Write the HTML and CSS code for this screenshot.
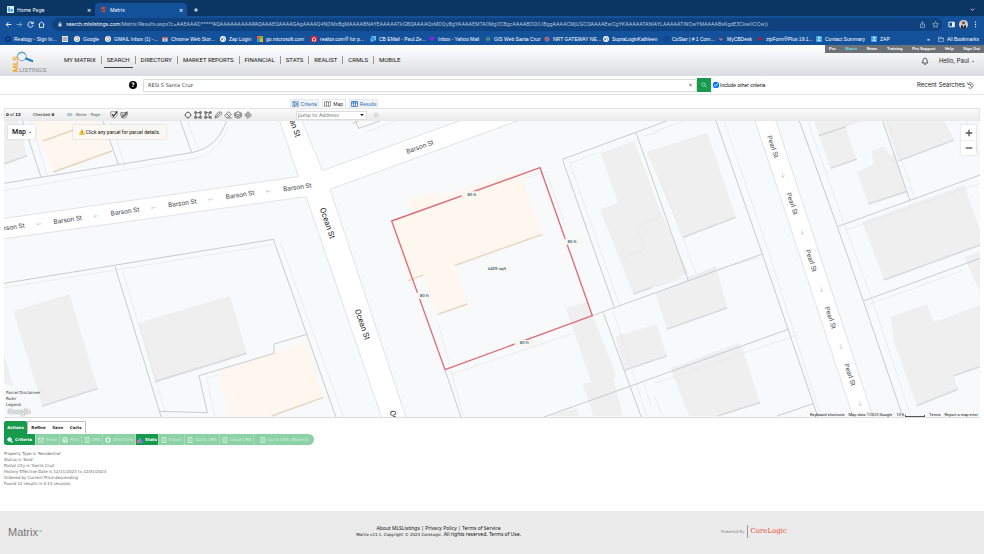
FILE: index.html
```html
<!DOCTYPE html>
<html lang="en">
<head>
<meta charset="utf-8">
<title>Matrix</title>
<link rel="stylesheet" href="styles.css">
</head>
<body>
<svg class="defs" aria-hidden="true">
  <symbol id="g" viewBox="0 0 12 12"><circle cx="6" cy="6" r="6" fill="#fff"/><path d="M9 4A3.600 3.600 0 0 0 3 4" fill="none" stroke="#e94435" stroke-width="1.600"/><path d="M3 4a4 4 0 0 0 0 4" fill="none" stroke="#f6b90a" stroke-width="1.600"/><path d="M3 8a3.600 3.600 0 0 0 5.500 .5" fill="none" stroke="#35a853" stroke-width="1.600"/><path d="M6 6h3.500q0 1.500-1 2.600" fill="none" stroke="#4285f4" stroke-width="1.600"/></symbol>
  <symbol id="globe" viewBox="0 0 12 12"><circle cx="6" cy="6" r="6" fill="#fff"/><path d="M2 4l3 1 1 2-2 3zM7 2l3 3-3 0zM8 7l2 0-2 3z" fill="#14519b"/></symbol>
  <symbol id="z" viewBox="0 0 12 12"><rect width="12" height="12" rx="1" fill="#42a5ec"/><path d="M3.500 3h5L4 9h5" fill="none" stroke="#fff" stroke-width="1.500"/></symbol>
  <symbol id="page" viewBox="0 0 12 12"><path d="M2 1h8v10H2z" fill="none" stroke="currentColor" stroke-width="1.500"/><path d="M4 4h4M4 6h4M4 8h4" stroke="currentColor"/></symbol>
</svg>

<div class="browser">
  <div class="tabstrip">
    <div class="tab"><svg viewBox="0 0 12 12"><rect width="12" height="12" fill="#d8eefa"/><path d="M2 2h3v8H2zM6 5h4v5H6z" fill="#3aa0dc"/></svg><span>Home Page</span><button aria-label="Close Home Page">×</button></div>
    <div class="tab current"><svg viewBox="0 0 12 12"><path d="M2 2l4-1 4 2-3 2 3 4-4 2-4-3z" fill="#c2503f"/><path d="M3 5l4 1-3 3z" fill="#64324c"/></svg><span>Matrix</span><button aria-label="Close Matrix">×</button></div>
    <button class="newtab" aria-label="New tab"><svg viewBox="0 0 12 12"><path d="M6 2v8M2 6h8" stroke="#fff" stroke-width="1.800"/></svg></button>
    <button class="more" aria-label="Search tabs"><svg viewBox="0 0 12 12"><path d="M2 4l4 4 4-4" fill="none" stroke="#fff" stroke-width="1.800"/></svg></button>
  </div>
  <div class="addressbar">
    <button aria-label="Back"><svg viewBox="0 0 12 12"><path d="M11 6H2M6 2L2 6l4 4" class="ln"/></svg></button>
    <button aria-label="Forward" class="dim"><svg viewBox="0 0 12 12"><path d="M1 6h9M6 2l4 4-4 4" class="ln"/></svg></button>
    <button aria-label="Reload"><svg viewBox="0 0 12 12"><path d="M10 4A4.500 4.500 0 1 0 10.500 7M10.500 1v3.500H7" class="ln"/></svg></button>
    <button aria-label="Home"><svg viewBox="0 0 12 12"><path d="M1 6l5-4.500L11 6M2.500 5v6h7V5" class="ln"/></svg></button>
    <div class="url">
      <svg viewBox="0 0 12 12"><rect x="3" y="5" width="6" height="6" fill="#c5d5e8"/><path d="M4 5V3q2-2 4 0v2" fill="none" stroke="#c5d5e8"/></svg>
      <label for="url">search.mlslistings.com</label><input id="url" value="/Matrix/Results.aspx?c=AAEAAAD*****AQAAAAAAAAARAQAAAEQAAAAGAgAAAAQ4NDMxBgMAAAABNAYEAAAAATkGBQAAAAQxMDQyBgYAAAAEMTA0Mg0CBgcAAAABOQ0JBggAAAACMjUGCQAAAAEwCgYKAAAAATANIAYLAAAAATINCwYMAAAABsKgdE3Ckw0CCw))">
      <button aria-label="Share"><svg viewBox="0 0 12 12"><path d="M4 5H2.500v6h7V5H8M6 8V1.500M4 3.500l2-2 2 2" class="ln thin"/></svg></button>
      <button aria-label="Bookmark"><svg viewBox="0 0 12 12"><path d="M6 1l1.500 3.400 3.500.4-2.700 2.400.8 3.800L6 9l-3.100 2 .8-3.800L1 4.800l3.500-.4z" class="ln thin"/></svg></button>
    </div>
    <button aria-label="Side panel"><svg viewBox="0 0 12 12"><path d="M1.500 2h9v8h-9z" class="ln"/><path d="M7 2h4v8H7z" fill="#fff"/></svg></button>
    <button aria-label="Profile" class="avatar"><svg viewBox="0 0 16 16"><circle cx="8" cy="8" r="8" fill="#d5d0d2"/><circle cx="8" cy="5" r="3" fill="#7d5145"/><path d="M3 15l1-6 4 1 4-1 1 6-5 1z" fill="#232433"/><path d="M7 9h2l-1 6z" fill="#fff"/></svg></button>
    <button aria-label="Menu"><svg viewBox="0 0 12 12"><g fill="#fff"><circle cx="6" cy="2" r="1.200"/><circle cx="6" cy="6" r="1.200"/><circle cx="6" cy="10" r="1.200"/></g></svg></button>
  </div>
  <nav class="bookmarks" aria-label="Bookmarks">
    <a href="#"><svg viewBox="0 0 12 12"><circle cx="6" cy="6" r="4.500" fill="none" stroke="#0a2a78" stroke-width="2.500"/></svg>Realogy - Sign In...</a>
    <a href="#" aria-label="Mail"><svg viewBox="0 0 12 12"><rect width="12" height="12" fill="#e9edf2"/><path d="M2 3h8v6H2zM2 6h8M6 3v6" fill="none" stroke="#746b76"/></svg></a>
    <a href="#"><svg><use href="#g"/></svg>Google</a>
    <a href="#"><svg><use href="#g"/></svg>GMAIL Inbox (1) -...</a>
    <a href="#"><svg viewBox="0 0 12 12"><path d="M1 3h10v8H1z" fill="#e8e8e8"/><path d="M1 2h10v3H1z" fill="#d95748"/><circle cx="6" cy="8" r="2" fill="#4b83d4"/></svg>Chrome Web Stor...</a>
    <a href="#"><svg><use href="#globe"/></svg>Zap Login</a>
    <a href="#"><svg viewBox="0 0 12 12"><path d="M0 0h6v6H0z" fill="#ef5b35"/><path d="M6 0h6v6H6z" fill="#83b42b"/><path d="M0 6h6v6H0z" fill="#1b9fdd"/><path d="M6 6h6v6H6z" fill="#f3b41b"/></svg>go.microsoft.com</a>
    <a href="#"><svg viewBox="0 0 12 12"><rect width="12" height="12" rx="2" fill="#d92236"/><path d="M3 10V5l3-2 3 2v5z" fill="none" stroke="#fff" stroke-width="1.500"/></svg>realtor.com® for p...</a>
    <a href="#"><svg viewBox="0 0 12 12"><rect x="3" width="9" height="9" fill="#63b9ec"/><rect y="3" width="8" height="9" fill="#1681d0"/><path d="M2 6h4M2 9h4" stroke="#fff"/></svg>CB EMail - Paul.Ze...</a>
    <a href="#"><svg viewBox="0 0 12 12"><path d="M0 3h12L6 9z" fill="#fff"/><path d="M0 2h12v4L6 9 0 6z" fill="#762bd8"/></svg>Inbox - Yahoo Mail</a>
    <a href="#"><svg viewBox="0 0 12 12"><circle cx="6" cy="6" r="5" fill="#357487"/><path d="M2 7q4-4 8 0" stroke="#94b7a0" fill="none"/></svg>GIS Web Santa Cruz</a>
    <a href="#"><svg viewBox="0 0 12 12"><circle cx="6" cy="6" r="5" fill="#8e7a96"/><path d="M3 4l5-1-2 7z" fill="#c74a4a"/></svg>NRT GATEWAY NE...</a>
    <a href="#"><svg><use href="#globe"/></svg>SupraLoginKathleen</a>
    <a href="#"><svg viewBox="0 0 12 12"><circle cx="6" cy="6" r="4.500" fill="none" stroke="#0d3d8a" stroke-width="2"/></svg>CoStar | # 1 Com...</a>
    <a href="#"><svg viewBox="0 0 12 12"><circle cx="6" cy="6" r="5.500" fill="#263d87"/><path d="M4 3v5h4V4" fill="none" stroke="#e0a3b0" stroke-width="1.500"/></svg>MyCBDesk</a>
    <a href="#"><svg viewBox="0 0 12 12"><path d="M1 9q0-7 5-7t5 7l-3-2-2 3-2-3z" fill="#962941"/></svg>zipForm®Plus 19.1...</a>
    <a href="#"><svg><use href="#z"/></svg>Contact Summary</a>
    <a href="#"><svg><use href="#z"/></svg>ZAP</a>
    <a href="#">»</a>
    <a href="#"><svg viewBox="0 0 12 12"><path d="M1 2h4l1 2h5v7H1zM1 5h10" fill="none" stroke="#d4e0f0"/></svg>All Bookmarks</a>
  </nav>
</div>

<header class="header">
  <a class="logo" href="#" aria-label="MLS Listings"><svg viewBox="0 0 108 66"><text transform="translate(20 64) rotate(-90)" class="mls">MLS</text><text x="23" y="64" class="listings">LISTINGS</text><circle cx="31" cy="16" r="13" fill="#eaf4fa" stroke="#6b7d89" stroke-width="2"/><path d="M19 10Q31-1 42 10" fill="none" stroke="#2797cf" stroke-width="3"/><path d="M44 23l18 7" stroke="#2485c8" stroke-width="7" stroke-linecap="round"/></svg></a>
  <nav class="mainnav" aria-label="Main">
    <a href="#">MY MATRIX</a><a href="#" class="on">SEARCH</a><a href="#">DIRECTORY</a><a href="#">MARKET REPORTS</a><a href="#">FINANCIAL</a><a href="#">STATS</a><a href="#">REALIST</a><a href="#">CRMLS</a><a href="#">MOBILE</a>
  </nav>
  <div class="account">
    <nav class="utility" aria-label="Utility"><a href="#">Pro</a><a href="#" class="on">Matrix</a><a href="#">News</a><a href="#">Training</a><a href="#">Pro Support</a><a href="#">Help</a><a href="#">Sign Out</a></nav>
    <div class="hello"><button aria-label="Notifications"><svg viewBox="0 0 16 16"><path d="M2 12q2-2 2-6 1-4 4-4t4 4q0 4 2 6zM6 14q2 2 4 0" fill="none" stroke="#333" stroke-width="1.500"/></svg></button><button>Hello, Paul <i class="caret"></i></button></div>
  </div>
</header>

<main>
  <form class="search">
    <button type="button" class="help" aria-label="Help">?</button>
    <div class="field"><input aria-label="Search" value="RESI S Santa Cruz"><button type="button" aria-label="Clear">×</button></div>
    <button type="button" class="go" aria-label="Run search"><svg viewBox="0 0 12 12"><circle cx="5" cy="5" r="3.500" fill="none" stroke="#fff"/><path d="M7.500 7.500L11 11" stroke="#fff"/></svg></button>
    <label class="include"><input type="checkbox" checked>Include other criteria</label>
    <button type="button" class="recent">Recent Searches <svg viewBox="0 0 14 14"><path d="M3 3a5.500 5.500 0 1 1 0 8M1 1l1 4h4M7 4v4l3 1" fill="none" stroke="#333" stroke-width="1.200"/></svg></button>
  </form>

  <div class="views">
    <a href="#"><svg viewBox="0 0 14 12"><path d="M0 2h14M0 6h14M0 10h14M4 0v4M10 4v4M5 8v4" stroke="#2a6fb8" stroke-width="1.500"/></svg>Criteria</a>
    <a href="#" class="on"><svg viewBox="0 0 14 12"><path d="M1 2l4-1 4 1 4-1v9l-4 1-4-1-4 1zM5 1v9M9 2v9" fill="none" stroke="#333"/></svg>Map</a>
    <a href="#"><svg viewBox="0 0 14 12"><path d="M1 1h12v10H1zM1 4h12M5 1v10M9 1v10" fill="none" stroke="#2a6fb8" stroke-width="1.500"/></svg>Results</a>
  </div>

  <div class="tools">
    <div class="count"><b>0</b> of <b>12</b></div>
    <div class="checked">Checked <b>0</b></div>
    <div class="select"><a href="#">All</a> - None - Page -</div>
    <div class="checks">
      <button aria-label="Keep checked"><svg viewBox="0 0 20 20"><path d="M2 2h16v9q-2 5-8 7-6-2-8-7z" fill="#fff" stroke="#555" stroke-width="1.500"/><path d="M5 8l4 5 9-12" fill="none" stroke="#333" stroke-width="3"/></svg></button>
      <button aria-label="Discard checked"><svg viewBox="0 0 20 20"><path d="M2 4h16v7q-2 5-8 7-6-2-8-7z" fill="#ddd" stroke="#555" stroke-width="1.500"/><path d="M5 8l4 5 9-12M3 17L19 5" fill="none" stroke="#333" stroke-width="2"/></svg></button>
    </div>
    <div class="shapes">
      <button aria-label="Circle"><svg viewBox="0 0 24 24"><circle cx="12" cy="12" r="8"/><path d="M12 1v5M12 18v5M1 12h5M18 12h5"/></svg></button>
      <button aria-label="Rectangle"><svg viewBox="0 0 24 24"><path d="M5 5h14v14H5z"/><path d="M2 2h5v5H2zM17 2h5v5h-5zM2 17h5v5H2zM17 17h5v5h-5z"/></svg></button>
      <button aria-label="Polygon"><svg viewBox="0 0 24 24"><path d="M5 5h14l-6 7 6 7H5z"/><path d="M2 2h5v5H2zM17 2h5v5h-5zM2 17h5v5H2zM17 17h5v5h-5z"/></svg></button>
      <button aria-label="Freehand"><svg viewBox="0 0 24 24"><path d="M3 21L6 11Q14 0 21 3T14 17zM7 17L18 6"/></svg></button>
      <button aria-label="Erase"><svg viewBox="0 0 24 24"><path d="M2 14L14 2l8 8-11 11H8zM8 8l8 8M11 21h12"/></svg></button>
      <button aria-label="Layers"><svg viewBox="0 0 24 24"><path d="M12 2l10 5-10 5L2 7zM2 12l10 5 10-5M2 17l10 5 10-5M2 7v10M22 7v10"/></svg></button>
      <button aria-label="Locate"><svg viewBox="0 0 24 24"><path d="M12 2l10 10-10 10L2 12z"/><circle cx="12" cy="12" r="4"/></svg></button>
    </div>
    <div class="jump"><select aria-label="Jump to Address"><option>Jump to Address</option></select></div>
    <button class="gear" aria-label="Map settings"><svg viewBox="0 0 16 16"><circle cx="8" cy="8" r="6" stroke-dasharray="3 1"/><circle cx="8" cy="8" r="3"/></svg></button>
  </div>

  <section class="map" aria-label="Map">
    <svg class="canvas" viewBox="12 3 2928 888">
      <rect x="12" y="3" width="2928" height="888" fill="#f8f9fb"/>
      <g class="bld">
        <path d="M12 0H55L82 107L12 132zM40 573L208 523L293 806L127 858zM12 700L40 800L12 790zM415 608L690 528L740 700L465 785z"/>
        <g transform="translate(990)"><path d="M812 100L912 62L990 270L1075 460L988 500L967 500L910 522L810 268L865 248zM708 565L772 545L858 765L850 775L878 888H790L758 793L783 785zM855 650L980 612L1010 708L885 750zM650 888L740 865L748 888z"/></g>
        <g transform="translate(1962)"><path d="M-22 95L160 38L245 292L88 352zM5 520L185 437L220 563L38 628zM50 745L255 668L265 685L318 848L190 888H105zM480 0H640L575 20L608 118L530 145L495 47zM608 155L660 133L652 93L690 80L712 110L722 98L757 215L643 252zM690 0H870L900 60L733 123zM625 305L930 195L978 330V375L690 480zM710 590L818 552L840 607L978 555V740L898 768L912 808L788 857L720 665zM930 410L978 395V515z"/></g>
      </g>
      <g fill="#fdf7f0">
        <path d="M92 0H298L336 93L160 156zM655 755L920 663L970 832L815 888H690z"/>
        <path transform="translate(990)" d="M238 240L318 215L330 232L570 148L637 343L375 436L413 552L323 583L280 465L235 482L183 303L248 280z"/>
      </g>
      <g class="shade">
        <path d="M12 132L82 107M127 858L293 806M465 785L740 700"/>
        <path transform="translate(990)" d="M910 522L967 502M885 750L1010 708" />
        <path transform="translate(1962)" d="M88 352L245 292M38 628L220 563M190 888L318 848M530 145L608 118M643 252L757 215M733 123L900 60M690 480L978 375M788 857L912 808M898 768L978 740"/>
      </g>
      <g class="tan"><path d="M160 156L336 93M128 63L255 18M815 888L970 832"/><path transform="translate(990)" d="M375 436L637 343M323 583L413 552M235 482L280 465M68 10L85 4"/></g>
      <g class="faint">
        <path d="M12 212L600 112Q665 85 685 15M92 0L142 170M330 0L375 140M560 0L597 90M12 503L820 374M366 450L500 888M840 365L1030 888M620 775L645 888M620 775L655 765"/>
        <path transform="translate(990)" d="M650 160L705 315M365 762L730 640M720 130L870 560M720 130L805 98M940 48L990 35M580 175L650 155M107 37L205 0M870 415L945 388L920 318L990 290M850 575L950 888M325 610L400 888M940 788L965 860"/>
        <path transform="translate(1962)" d="M0 35L95 0M210 0L345 400L500 888M460 0L570 310L660 555L770 888M575 330L978 190M640 555L930 450M0 500L325 410M0 790L430 645M20 178L130 470M700 0L785 240M0 825L25 888M935 0L978 110"/>
      </g>
      <path class="road" d="M0 297L895 170L838 0H905L967 152L1385 0H1560L990 208L1218 892H1145L990 440L918 230L0 358z"/>
      <path class="road" d="M2264 0H2327L2619 892H2560z"/>
      <g class="lot">
        <path d="M12 190L575 98Q655 82 680 0M67 0L123 172M308 0L355 133M540 0L575 98M12 490L820 358L1008 892M345 440L484 892M478 874L622 878L597 767L822 700V672L920 643"/>
        <path transform="translate(990)" d="M345 749L393 892M853 562L697 118L1010 3M918 38L1075 482M787 587L1297 402M820 578L934 892M640 892L1377 627M75 0L86 25L150 3"/>
        <path transform="translate(1962)" d="M185 0L325 402L492 892M435 0L550 320L628 543L747 892M550 320L978 165M628 543L978 415M685 0L767 240M370 888L480 850M495 47L575 20"/>
      </g>
      <path class="parcel" transform="translate(990)" d="M185 303L630 143L787 587L345 749z"/>
      <g class="street">
        <text transform="translate(32 329) rotate(-8)">Barson St</text><text transform="translate(204 306) rotate(-8)">Barson St</text><text transform="translate(376 281) rotate(-8)">Barson St</text><text transform="translate(548 256) rotate(-8)">Barson St</text><text transform="translate(721 231) rotate(-8)">Barson St</text><text transform="translate(893 208) rotate(-8)">Barson St</text><text transform="translate(1262 87) rotate(-20)">Barson St</text>
        <g class="big"><text transform="translate(871 8) rotate(71)">Ocean St</text><text transform="translate(975 312) rotate(71)">Ocean St</text><text transform="translate(1080 616) rotate(71)">Ocean St</text><text transform="translate(1184 920) rotate(71)">Ocean St</text></g>
        <text transform="translate(2312 82) rotate(71)">Pearl St</text><text transform="translate(2370 253) rotate(71)">Pearl St</text><text transform="translate(2427 424) rotate(71)">Pearl St</text><text transform="translate(2485 595) rotate(71)">Pearl St</text><text transform="translate(2543 766) rotate(71)">Pearl St</text>
      </g>
      <g class="arrow"><path d="M111 313l14-2M111 313l5-4M111 313l5 3M282 289l14-2M282 289l5-4M282 289l5 3M454 264l14-2M454 264l5-4M454 264l5 3M626 239l14-2M626 239l5-4M626 239l5 3M799 215l14-2M799 215l5-4M799 215l5 3"/><path d="M2346 158l4 14M2350 172l-6-3M2350 172l2-6M2404 329l4 14M2408 343l-6-3M2408 343l2-6M2462 501l4 14M2466 515l-6-3M2466 515l2-6M2520 672l4 14M2524 686l-6-3M2524 686l2-6M2578 843l4 14M2582 857l-6-3M2582 857l2-6"/></g>
      <g class="dim-bg"><path d="M1385 214h60v18h-60zM1694 356h52v18h-52zM1249 518h46v18h-46zM1544 660h60v18h-60zM1461 439h70v16h-70z"/></g>
      <g class="dims"><text x="1415" y="227">80 ft</text><text x="1716" y="369">80 ft</text><text x="1273" y="531">80 ft</text><text x="1573" y="673">80 ft</text><text x="1491" y="451">6409 sqft</text></g>
    </svg>
    <button class="maptype">Map <i class="caret"></i></button>
    <p class="notice"><svg viewBox="0 0 12 12"><path d="M6 1l5.500 10H.5z" fill="#f6cf45" stroke="#d8ab27"/><path d="M6 4v4M6 9v1" stroke="#5e4a12"/></svg>Click any parcel for parcel details.</p>
    <div class="zoom"><button aria-label="Zoom in"><svg viewBox="0 0 12 12"><path d="M6 1v10M1 6h10" stroke="#555" stroke-width="2"/></svg></button><button aria-label="Zoom out"><svg viewBox="0 0 12 12"><path d="M1 6h10" stroke="#555" stroke-width="2"/></svg></button></div>
    <div class="maplinks"><a href="#">Parcel Disclaimer</a><a href="#">Ruler</a><a href="#">Legend</a><span class="google">Google</span></div>
    <div class="credits"><a href="#">Keyboard shortcuts</a><span>Map data ©2023 Google</span><span class="scale">10 ft <i></i></span><a href="#">Terms</a><a href="#">Report a map error</a></div>
  </section>

  <section class="actions">
    <div class="actiontabs"><button class="on">Actions</button><div><button>Refine</button><button>Save</button><button>Carts</button></div></div>
    <div class="actionbar">
      <button class="on"><svg viewBox="0 0 12 12"><circle cx="5" cy="5" r="3.500" fill="#dff" stroke="#fff" stroke-width="2"/><path d="M8 8l3 3" stroke="#fff" stroke-width="2.500"/></svg>Criteria</button>
      <button disabled><svg viewBox="0 0 12 12"><path d="M0 2h12v8H0zM0 2l6 5 6-5" fill="none" stroke="currentColor" stroke-width="1.500"/></svg>Email</button>
      <button disabled><svg viewBox="0 0 12 12"><path d="M3 4V1h6v3M1 4h10v5H1zM3 7h6v4H3z" fill="none" stroke="currentColor" stroke-width="1.500"/></svg>Print</button>
      <button disabled><svg><use href="#page"/></svg>CMA</button>
      <button disabled><svg viewBox="0 0 12 12"><circle cx="6" cy="6" r="4" fill="none" stroke="currentColor" stroke-width="3"/></svg>Directions</button>
      <button class="on"><svg viewBox="0 0 12 12"><path d="M0 6h4v6H0z" fill="#ef6382"/><path d="M4 2h4v10H4z" fill="#6495ed"/><path d="M8 7h4v5H8z" fill="#8a68d0"/></svg>Stats</button>
      <button disabled><svg><use href="#page"/></svg>Export</button>
      <button disabled><svg><use href="#page"/></svg>Quick CMA</button>
      <button disabled><svg><use href="#page"/></svg>Cloud CMA</button>
      <button disabled><svg><use href="#page"/></svg>Quick CMA (Modern)</button>
    </div>
  </section>

  <section class="summary">
    <p>Property Type is 'Residential'</p><p>Status is 'Sold'</p><p>Postal City is 'Santa Cruz'</p><p>History Effective Date is 12/11/2023 to 12/01/2023</p><p>Ordered by Current Price descending</p><p>Found 12 results in 0.13 seconds.</p>
  </section>
</main>

<footer class="footer">
  <div class="brand">Matrix<sup>™</sup></div>
  <div class="legal"><p class="links"><a href="#">About MLSListings</a> | <a href="#">Privacy Policy</a> | <a href="#">Terms of Service</a></p><p>Matrix v11.1. Copyright © 2023 CoreLogic. <span class="links">All rights reserved. <a href="#">Terms of Use.</a></span></p></div>
  <div class="powered"><span>Powered By</span><strong>CoreLogic</strong></div>
</footer>
</body>
</html>
```

FILE: styles.css
```css
* { box-sizing: border-box; }
body { margin: 0; min-height: 100vh; display: flex; flex-direction: column; background: #fff; color: #222; font: 4px/6px "DejaVu Sans", sans-serif; overflow-x: hidden; }
main { flex: 1; display: flex; flex-direction: column; }
button, input, select { font: inherit; color: inherit; margin: 0; padding: 0; border: 0; background: none; }
button { display: flex; align-items: center; justify-content: center; white-space: nowrap; }
a { color: inherit; text-decoration: none; }
p { margin: 0; }
svg { display: block; flex: none; }
.defs { position: absolute; width: 0; height: 0; }
.ln { fill: none; stroke: #fff; stroke-width: 1.500; }
.thin { stroke: #c5d5e8; stroke-width: 1; }
.caret { display: inline-block; margin-left: 3px; border: 1px solid transparent; border-top-color: currentColor; border-bottom: 0; }

/* Browser chrome */
.browser { background: #14519b; color: #fff; font: 5px/6px Inter, sans-serif; }
.tabstrip { display: flex; align-items: flex-end; height: 16px; background: #0b3563; padding-right: 8px; }
.tab { display: flex; align-items: center; gap: 3px; width: 95px; height: 13px; padding: 0 3px 0 7px; }
.tab.current { width: 92px; padding: 0 3px 0 5px; background: #14519b; border-radius: 4px 4px 0 0; }
.tab svg { width: 7px; height: 7px; }
.tab span { flex: 1; }
.tab button { width: 6px; height: 6px; font-size: 7px; }
.newtab, .more { width: 8px; height: 13px; }
.newtab { margin-left: 5px; }
.more { margin-left: auto; }
.newtab svg { width: 6px; height: 6px; }
.more svg { width: 5px; height: 5px; }
.addressbar { display: flex; align-items: center; gap: 4px; height: 16px; padding: 0 5px; }
.addressbar svg { width: 7px; height: 7px; }
.addressbar .dim { opacity: .5; }
.addressbar .avatar svg { width: 9px; height: 9px; }
.url { flex: 1; display: flex; align-items: center; height: 13px; margin: 0 2px 0 3px; padding: 0 3px 0 5px; border-radius: 7px; background: #10427f; }
.url > svg { margin-right: 3px; width: 6px; height: 6px; }
.url input { flex: 1; min-width: 0; color: #b4c7de; }
.url button { margin-left: 6px; }
.bookmarks { display: grid; grid-template-columns: 57fr 12fr 31fr 57fr 58fr 37fr 54fr 59fr 59fr 56fr 59fr 59fr 60fr 55fr 39fr 59fr 55fr 56fr 11fr 46fr; align-items: center; height: 13px; padding-left: 5px; font-family: "Liberation Sans", sans-serif; }
.bookmarks a { display: flex; align-items: center; gap: 3px; width: 0; white-space: nowrap; }
.bookmarks svg { width: 6px; height: 6px; }

/* Site header */
.header { display: flex; align-items: flex-start; height: 31px; padding-left: 11px; background: linear-gradient(#fff, #dadde0); font: 6px/8px Roboto, sans-serif; }
.logo svg { width: 37px; height: 22px; margin-top: 6px; }
.mls { font: 700 24px Roboto, sans-serif; fill: #f0a82c; }
.listings { font: 18px "Liberation Sans", sans-serif; fill: #7d8388; }
.logo { width: 48px; }
.mainnav { display: flex; margin-top: 11px; color: #111; }
.mainnav a { position: relative; padding: 0 5px; }
.mainnav a + a { border-left: 1px solid #999; }
.mainnav .on::after { content: ""; position: absolute; left: 2px; right: 2px; bottom: -4px; height: 1px; background: #444; }
.account { margin-left: auto; width: 159px; font-family: Inter, sans-serif; }
.utility { display: flex; justify-content: space-between; height: 8px; padding: 0 4px; background: #6d7276; color: #fff; font: 700 4px/7px "Liberation Sans", sans-serif; }
.utility .on { color: #7fdcec; }
.hello { display: flex; justify-content: flex-end; gap: 10px; padding: 4px 10px 0 0; }
.hello svg { width: 8px; height: 8px; }

/* Search row */
.search { display: flex; align-items: center; height: 19px; padding: 0 10px 0 129px; border-bottom: 1px solid #e4e4e4; }
.help { width: 8px; height: 8px; margin-right: 6px; border-radius: 50%; background: #000; color: #fff; font-weight: 700; font-size: 6px; }
.field { flex: 1; display: flex; height: 13px; padding: 0 3px 0 4px; border: 1px solid #ddd; font-size: 5px; color: #444; }
.field input { flex: 1; min-width: 0; }
.field button { color: #555; font-size: 6px; }
.go { width: 14px; height: 14px; background: #189a4c; }
.go svg { width: 6px; height: 6px; }
.include { display: flex; align-items: center; gap: 1px; width: 206px; padding-left: 2px; font: 5px/6px "Liberation Sans", sans-serif; color: #000; }
.include input { width: 6px; height: 6px; }
.recent { gap: 2px; font: 6px/8px Inter, sans-serif; }
.recent svg { width: 7px; height: 7px; }

.views { display: flex; justify-content: center; gap: 3px; height: 13px; padding: 4px 0 0; margin-right: 316px; }
.views { font: 5px/6px "Liberation Sans", sans-serif; color: #2a6fb8; }
.views a { display: flex; align-items: center; justify-content: center; gap: 2px; min-width: 24px; padding: 0 1px; background: #f1f3f6; border: 1px solid #e5e8ec; border-bottom: 0; }
.views .on { background: #fff; color: #222; }
.views svg { width: 7px; height: 6px; }

.tools { display: flex; align-items: center; height: 13px; margin: 0 4px; padding-left: 1px; border: 1px solid #e4e4e4; border-bottom: 0; background: linear-gradient(#fcfcfc, #e8e8e8); color: #111; }
.count { width: 27px; }
.checked { width: 34px; }
.select { width: 43px; color: #555; }
.select a { color: #2a6fb8; }
.checks, .shapes { display: flex; gap: 2px; }
.checks { width: 74px; }
.checks svg { width: 8px; height: 8px; }
.shapes { width: 112px; }
.shapes svg { width: 8px; height: 8px; fill: none; stroke: #444; stroke-width: 2; }
.jump { display: flex; align-items: center; width: 71px; height: 9px; border: 1px solid #ddd; background: #fff; color: #666; font-size: 5px; }
.jump select { flex: 1; height: 7px; padding-left: 1px; appearance: none; outline: 0; }
.jump::after { content: ""; margin-right: 2px; border: 2px solid transparent; border-top-color: #222; border-bottom: 0; }
.gear { margin-left: 6px; }
.gear svg { width: 6px; height: 6px; fill: none; stroke: #aaa; stroke-width: 1; }

/* Map */
.map { position: relative; margin: 0 4px; border-bottom: 1px solid #ddd; }
.canvas { width: 100%; height: auto; }
.bld { fill: #efefef; }
.shade { fill: none; stroke: #d9dbde; stroke-width: 5; }
.tan { fill: none; stroke: #e8d5bd; stroke-width: 4; }
.faint { fill: none; stroke: #e4e6e8; stroke-width: 2; }
.road { fill: #fff; stroke: #d4d7da; stroke-width: 2; }
.lot { fill: none; stroke: #c8cbce; stroke-width: 3; }
.parcel { fill: none; stroke: #df6b78; stroke-width: 4; }
.street { font: 20px Roboto, sans-serif; fill: #4a4d50; text-anchor: middle; }
.street .big { font-size: 24px; fill: #222; }
.arrow { fill: none; stroke: #999; stroke-width: 1; }
.dim-bg { fill: #fbf7ee; }
.dims { font: 500 13px Roboto, sans-serif; fill: #2f6288; text-anchor: middle; }
.maptype, .notice, .zoom, .maplinks, .credits { position: absolute; }
.maptype { left: 4px; top: 4px; width: 27px; height: 14px; background: #fff; color: #111; font: 500 7px/8px Roboto, sans-serif; box-shadow: 0 0 2px #ccc; }
.notice { left: 69px; top: 4px; display: flex; align-items: center; justify-content: center; gap: 1px; width: 93px; height: 14px; background: #fbf7f2; color: #111; font: 5px/6px Roboto, sans-serif; white-space: nowrap; box-shadow: 0 0 2px #ccc; }
.notice svg { width: 6px; height: 6px; }
.zoom { right: 4px; top: 4px; width: 15px; background: #fff; box-shadow: 0 0 2px #ccc; }
.zoom button { width: 15px; height: 15px; }
.zoom button + button { border-top: 1px solid #eee; }
.zoom svg { width: 8px; height: 8px; }
.maplinks { left: 2px; bottom: 1px; display: flex; flex-direction: column; color: #333; }
.google { margin-left: 2px; font: 700 7px/8px Roboto, sans-serif; color: #fff; text-shadow: 0 0 1px #777, 0 0 1px #777; }
.credits { right: 2px; bottom: 0; display: flex; gap: 4px; color: #111; font: 4px/5px Roboto, sans-serif; white-space: nowrap; }
.scale { display: flex; align-items: flex-end; gap: 1px; }
.scale i { width: 20px; height: 2px; border: 1px solid #555; border-top: 0; }

/* Actions */
.actions { padding: 3px 4px 0; }
.actiontabs { display: flex; height: 13px; font-weight: 700; }
.actiontabs > .on { width: 23px; background: #189a4c; color: #fff; border-radius: 2px 2px 0 0; }
.actiontabs div { display: flex; justify-content: space-around; width: 59px; height: 12px; border: 1px solid #bbb; border-bottom: 0; border-radius: 0 2px 0 0; }
.actionbar { display: grid; grid-template-columns: 32px 24px 22px 21px 33px 23px 26px 35px 34px 60px; width: 310px; height: 11px; overflow: hidden; border-radius: 0 6px 6px 3px; background: #8dd1a6; }
.actionbar button { gap: 2px; border-right: 1px solid #a9dcbb; color: #d8f2e0; }
.actionbar button:last-child { border-right: 0; }
.actionbar .on { background: #189a4c; color: #fff; font-weight: 700; }
.actionbar svg { width: 6px; height: 6px; }
.summary { padding: 6px 4px 0; color: #666; }

/* Footer */
.footer { display: grid; grid-template-columns: 1fr 2fr 1fr; align-items: center; height: 43px; padding: 0 8px 2px; background: #ebebeb; }
.brand { font: 11px/12px "Liberation Sans", sans-serif; color: #777; }
.brand sup { font-size: 4px; vertical-align: top; }
.legal { padding-right: 107px; text-align: center; color: #111; white-space: nowrap; }
.legal .links { font: 5px/6px "Noto Sans", sans-serif; }
.powered { display: flex; align-items: center; margin-left: -13px; color: #888; }
.powered span { padding-right: 3px; }
.powered strong { padding-left: 2px; border-left: 1px solid #999; font: 7px/13px "DejaVu Serif", serif; color: #e4523b; }
```
